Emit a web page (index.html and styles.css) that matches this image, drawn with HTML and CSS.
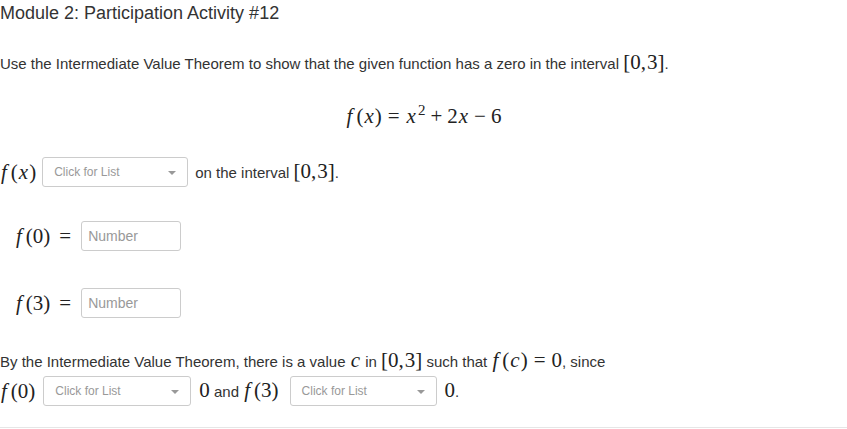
FILE: index.html
```html
<!DOCTYPE html>
<html>
<head>
<meta charset="utf-8">
<link rel="stylesheet" href="styles.css">
</head>
<body>
<div class="page">
  <h1 class="title">Module 2: Participation Activity #12</h1>
  <p class="intro">Use the Intermediate Value Theorem to show that the given function has a zero in the interval <span class="m">[0<span class="comma">,</span>3]</span>.</p>
  <div class="equation"><span class="m"><i class="f">f</i>(<i class="v">x</i>)<span class="rel">=</span><i class="v">x</i><sup>2</sup><span class="bin">+</span>2<i class="v">x</i><span class="bin">−</span>6</span></div>

  <div class="row row-fx">
    <span class="m"><i class="f">f</i>(<i class="v">x</i>)</span>
    <div class="select"><span class="select-text">Click for List</span><span class="caret"></span></div>
    <span class="txt">on the interval <span class="m">[0<span class="comma">,</span>3]</span>.</span>
  </div>

  <div class="row row-val row-f0">
    <span class="m"><i class="f">f</i>(0)<span class="rel rel-end">=</span></span>
    <div class="input">Number</div>
  </div>

  <div class="row row-val row-f3">
    <span class="m"><i class="f">f</i>(3)<span class="rel rel-end">=</span></span>
    <div class="input">Number</div>
  </div>

  <p class="conclusion">By the Intermediate Value Theorem, there is a value <span class="m"><i class="v">c</i></span> in <span class="m">[0<span class="comma">,</span>3]</span> such that <span class="m"><i class="f">f</i>(<i class="v">c</i>)<span class="rel">=</span>0</span>, since</p>
  <div class="row row-last">
    <span class="m"><i class="f">f</i>(0)</span>
    <div class="select select-b"><span class="select-text">Click for List</span><span class="caret"></span></div>
    <span class="txt"><span class="m">0</span> and <span class="m"><i class="f">f</i>(3)</span></span>
    <div class="select select-c"><span class="select-text">Click for List</span><span class="caret"></span></div>
    <span class="txt"><span class="m">0</span>.</span>
  </div>
  <div class="rule"></div>
</div>
</body>
</html>
```

FILE: styles.css
```css
html, body {
  margin: 0;
  padding: 0;
  background: #ffffff;
}

.page {
  font-family: "Liberation Sans", Arial, sans-serif;
  font-size: 15px;
  color: #333333;
  width: 847px;
}

.title {
  font-size: 18px;
  font-weight: normal;
  line-height: 20px;
  margin: 0;
  padding-top: 3px;
}

.intro {
  margin: 31px 0 0 0;
  line-height: 20px;
}

.m {
  font-family: "Liberation Serif", "Times New Roman", serif;
  font-size: 21px;
  line-height: 16px;
  color: #222222;
}

.m i {
  font-style: italic;
}

.m .f {
  margin-right: 4px;
  margin-left: 1px;
}

.m .v {
  margin: 0 1px;
}

.m .comma {
  margin-right: 1px;
}

.m sup {
  font-size: 15px;
  line-height: 0;
  vertical-align: 8px;
  margin-left: 1px;
}

.rel {
  margin: 0 6px;
}

.rel-end {
  margin-left: 9px;
  margin-right: 0;
}

.bin {
  margin: 0 5px;
}

.equation {
  margin-top: 32px;
  text-align: center;
  line-height: 24px;
  height: 24px;
}

.row {
  display: flex;
  align-items: center;
}

.row-fx {
  margin-top: 27px;
  height: 30px;
}

.row-fx .select {
  margin-left: 6px;
  width: 146px;
}

.row-fx .txt {
  margin-left: 7px;
}

.select {
  box-sizing: border-box;
  height: 30px;
  border: 1px solid #cccccc;
  border-radius: 3px;
  display: flex;
  align-items: center;
  justify-content: space-between;
  padding: 0 11px 0 11px;
  background: #ffffff;
}

.select-text {
  font-size: 12px;
  color: #999999;
}

.caret {
  width: 0;
  height: 0;
  border-left: 4px solid transparent;
  border-right: 4px solid transparent;
  border-top: 4px solid #999999;
  margin-top: 1px;
}

.row-val {
  padding-left: 15px;
  height: 30px;
}

.row-f0 {
  margin-top: 34px;
}

.row-f3 {
  margin-top: 37px;
}

.input {
  box-sizing: border-box;
  width: 100px;
  height: 30px;
  margin-left: 10px;
  border: 1px solid #cccccc;
  border-radius: 3px;
  padding-left: 6px;
  display: flex;
  align-items: center;
  color: #999999;
  font-size: 14px;
}

.conclusion {
  margin: 34px 0 0 0;
  line-height: 20px;
}

.row-last {
  margin-top: 4px;
  height: 30px;
}

.row-last .select-b {
  margin-left: 8px;
  width: 148px;
}

.row-last .txt {
  margin-left: 8px;
}

.row-last .select-c {
  margin-left: 11px;
  width: 147px;
}

.rule {
  margin-top: 21px;
  height: 1px;
  background: #e6e6e6;
}
```
